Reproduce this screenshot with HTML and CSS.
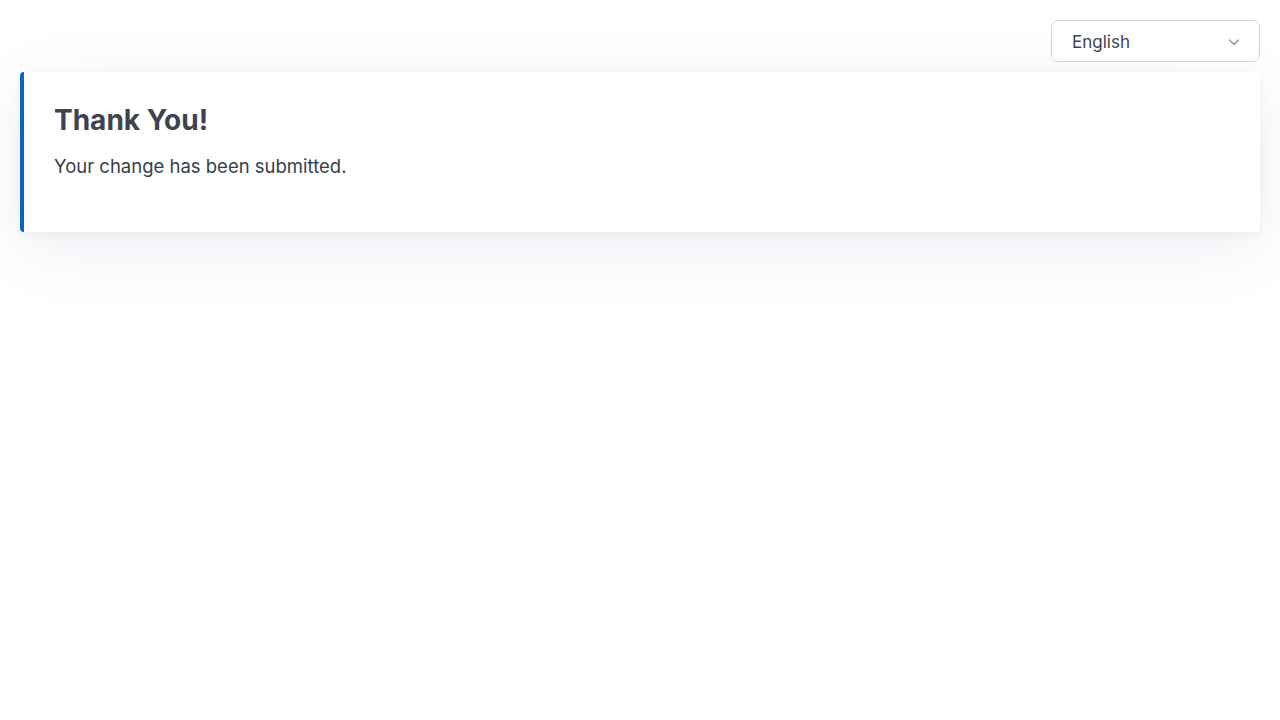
FILE: index.html
```html
<!DOCTYPE html>
<html lang="en">
<head>
  <meta charset="UTF-8">
  <meta name="viewport" content="width=device-width, initial-scale=1.0">
  <title>Thank You</title>
  <link rel="stylesheet" href="styles.css">
</head>
<body>

  <div class="topbar">
    <div class="lang-select">
      <span>English</span>
      <svg class="chevron" width="14" height="14" viewBox="0 0 14 14" fill="none">
        <path d="M2.5 5 L7 9.5 L11.5 5" stroke="#8a8f99" stroke-width="1.3" stroke-linecap="round" stroke-linejoin="round"/>
      </svg>
    </div>
  </div>

  <div class="card">
    <h1>Thank You!</h1>
    <p>Your change has been submitted.</p>
  </div>

</body>
</html>
```

FILE: styles.css
```css
html {
  background-color: #fff;
}

body {
  margin: 0;
  padding: 20px;
  min-height: 100vh;
  box-sizing: border-box;
  background-color: #fff;
  font-family: Inter, "Noto Sans", sans-serif;
  color: #3b3f4a;
}

.topbar {
  display: flex;
  justify-content: flex-end;
  margin-bottom: 10px;
}

.lang-select {
  width: 209px;
  height: 42px;
  box-sizing: border-box;
  display: flex;
  align-items: center;
  justify-content: space-between;
  padding: 1px 18px 0 20px;
  border: 1px solid #d2d4d9;
  border-radius: 7px;
  background-color: #fff;
  font-size: 17px;
  color: #3b4354;
}

.card {
  background-color: #fff;
  border-left: 4px solid #0a64c8;
  border-radius: 4px;
  padding: 31px 30px 34px;
  box-shadow: 0 3px 8px rgba(60, 64, 110, 0.06), 0 16px 70px rgba(60, 64, 130, 0.09);
}

.card h1 {
  margin: 0 0 16px;
  font-size: 28px;
  font-weight: 700;
  line-height: 34px;
  color: #3f4350;
}

.card p {
  margin: 0 0 18px;
  font-size: 18.5px;
  line-height: 27px;
  color: #383d4b;
}
```
